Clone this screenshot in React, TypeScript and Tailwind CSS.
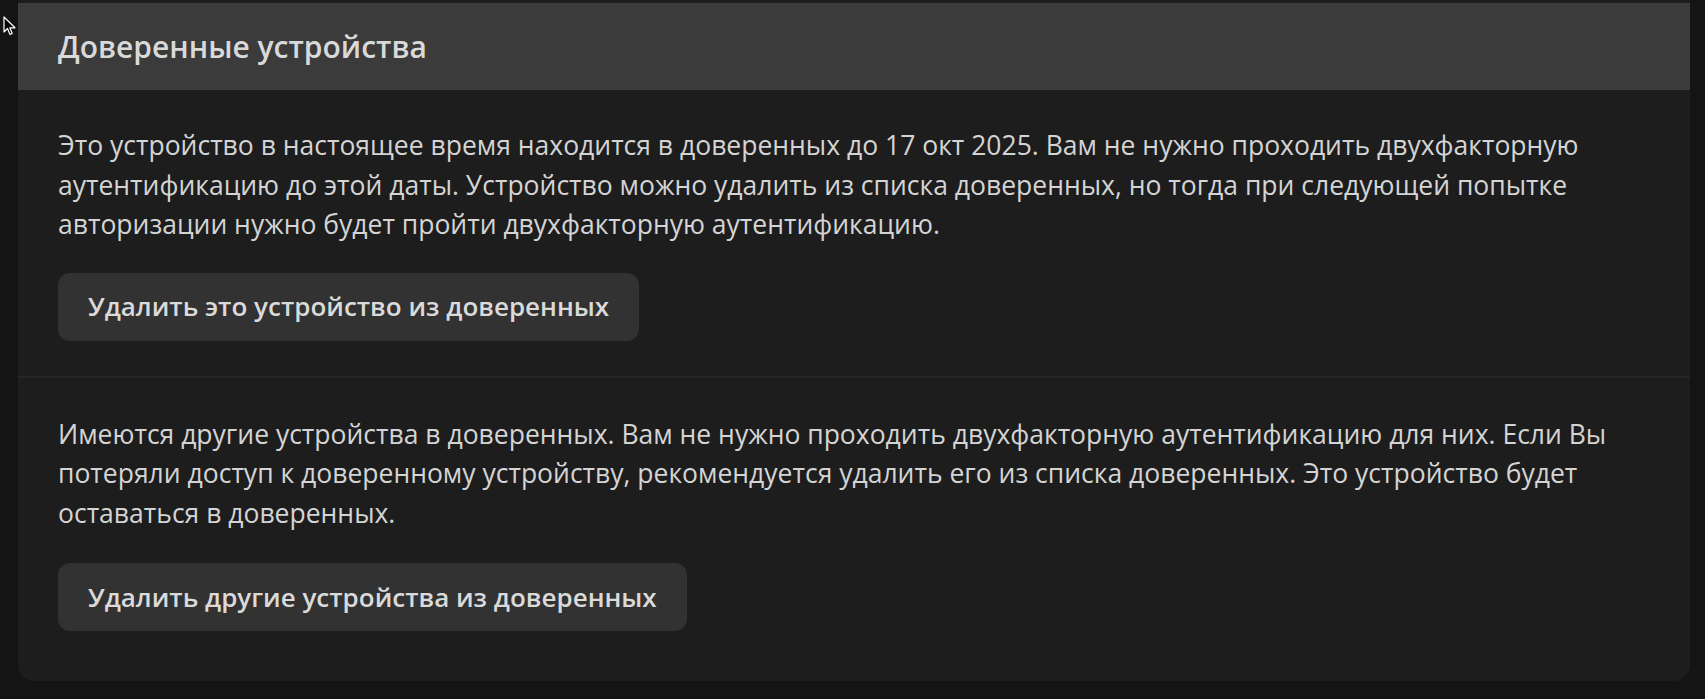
import React from "react";

const font = { fontFamily: '"Open Sans", "Noto Sans", sans-serif' };

function Section({ text, action, last }: { text: string; action: string; last?: boolean }) {
  return (
    <section className={last ? "px-[40px] pt-[37px] pb-[50px]" : "border-b-2 border-[#262626] px-[40px] pt-[36px] pb-[35px]"}>
      <p className="text-[26.5px] leading-[39.5px] text-[#d4d4d4]">{text}</p>
      <button className={(last ? "mt-[30px]" : "mt-[28px]") + " h-[68px] rounded-[12px] bg-[#323232] px-[30px] text-[26px] font-semibold text-[#dadada]"}>
        {action}
      </button>
    </section>
  );
}

export default function App() {
  return (
    <div className="relative min-h-[699px] w-full bg-[#141414]" style={font}>
      <svg className="absolute left-[3px] top-[16px]" width="14" height="20" viewBox="0 0 14 20">
        <path d="M1 1 L1 16 L4.5 12.5 L7 18.5 L9.2 17.5 L6.8 11.8 L12 11.8 Z" fill="#000" stroke="#fff" strokeWidth="1.2" strokeLinejoin="round" />
      </svg>
      <div className="ml-[18px] w-[1672px] rounded-b-[16px] bg-[#1d1d1d] pt-[3px]">
        <header className="flex h-[87px] items-center bg-[#3b3b3b] px-[40px]">
          <h2 className="text-[30px] font-semibold text-[#d9d9d9]">Доверенные устройства</h2>
        </header>
        <Section
          text="Это устройство в настоящее время находится в доверенных до 17 окт 2025. Вам не нужно проходить двухфакторную аутентификацию до этой даты. Устройство можно удалить из списка доверенных, но тогда при следующей попытке авторизации нужно будет пройти двухфакторную аутентификацию."
          action="Удалить это устройство из доверенных"
        />
        <Section
          last
          text="Имеются другие устройства в доверенных. Вам не нужно проходить двухфакторную аутентификацию для них. Если Вы потеряли доступ к доверенному устройству, рекомендуется удалить его из списка доверенных. Это устройство будет оставаться в доверенных."
          action="Удалить другие устройства из доверенных"
        />
      </div>
    </div>
  );
}
